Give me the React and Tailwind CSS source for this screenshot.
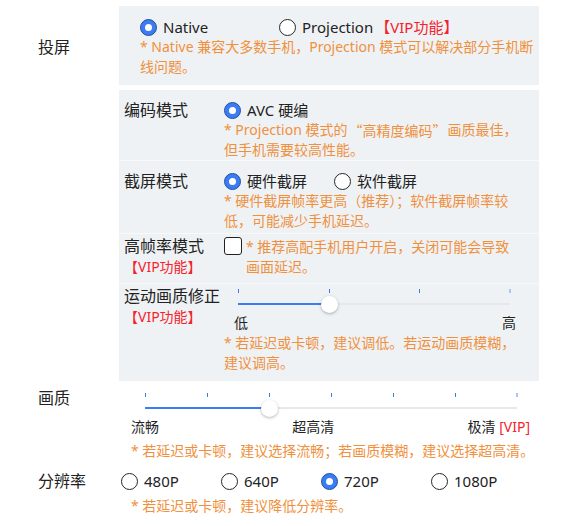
import React from "react";

const Radio = ({ checked }) =>
  checked ? (
    <span className="w-[17px] h-[17px] rounded-full bg-[#3b7cf4] border border-[#24529e] flex items-center justify-center shrink-0">
      <span className="w-[7px] h-[7px] rounded-full bg-white" />
    </span>
  ) : (
    <span className="w-[17px] h-[17px] rounded-full bg-white border border-[#262626] shrink-0" />
  );

const Opt = ({ checked, label, w }) => (
  <div className={`flex items-center h-[20px] ${w}`}>
    <Radio checked={checked} />
    <span className="ml-[6px] text-[15px] leading-[20px] text-[#222]">{label}</span>
  </div>
);

const Orange = ({ children, className = "" }) => (
  <div className={`text-[14px] leading-[20px] text-[#f0903c] ${className}`}>{children}</div>
);

const Vip = ({ className = "" }) => (
  <span className={`text-[#f5222d] ${className}`}>【VIP功能】</span>
);

const Slider = ({ ticks, value, width }) => {
  const step = width / (ticks - 1);
  const pos = step * value;
  return (
    <div style={{ width }} className="relative">
      <div className="relative h-[4px]">
        {Array.from({ length: ticks }).map((_, i) => (
          <span
            key={i}
            className={`absolute top-0 h-[4px] ${i === ticks - 1 ? "w-[2px] bg-[#a9c6f7]" : "w-[1px] bg-[#3b7cf4]"}`}
            style={{ left: i === ticks - 1 ? step * i - 1 : step * i }}
          />
        ))}
      </div>
      <div className="relative h-[17px] mt-[3px]">
        <div className="absolute left-0 right-0 top-[7px] h-[2px] bg-[#e6e8eb]" />
        <div className="absolute left-0 top-[7px] h-[2px] bg-[#3b7cf4]" style={{ width: pos }} />
        <div
          className="absolute top-0 w-[17px] h-[17px] rounded-full bg-white shadow-[0_1px_3px_rgba(0,0,0,0.3)]"
          style={{ left: pos - 8 }}
        />
      </div>
    </div>
  );
};

export default function App() {
  return (
    <div className="w-[569px] h-[526px] bg-white pt-[6px] font-['Noto_Sans','Noto_Sans_CJK_SC',sans-serif] text-[#222] overflow-hidden">
      {/* 投屏 */}
      <div className="flex">
        <div className="w-[119px] pl-[38px] flex items-center pt-[3px] text-[16px] leading-[24px]">投屏</div>
        <div className="w-[420px] bg-[#eff2f5] pt-[11px] pb-[8px] pl-[21px]">
          <div className="flex items-center h-[20px]">
            <Opt checked label="Native" w="w-[139px]" />
            <Opt label="Projection" w="" />
            <Vip className="ml-[2px] text-[15px] leading-[20px]" />
          </div>
          <Orange className="w-[398px]">
            * Native 兼容大多数手机，Projection 模式可以解决部分手机断线问题。
          </Orange>
        </div>
      </div>

      {/* panel 2 */}
      <div className="ml-[119px] mt-[5px] w-[420px] bg-[#eff2f5]">
        {/* 编码模式 */}
        <div className="flex pl-[5px] pr-[19px] pt-[10px]">
          <div className="w-[100px] text-[16px] leading-[20px]">编码模式</div>
          <div className="w-[296px]">
            <Opt checked label="AVC 硬编" w="" />
            <Orange>
              * Projection 模式的
              <span className="inline-block align-top h-[20px] mx-[1px] leading-[20px] font-['Noto_Sans_CJK_SC',sans-serif]">“高精度编码”</span>
              画质最佳，但手机需要较高性能。
            </Orange>
          </div>
        </div>
        <div className="h-[1px] bg-[#f7f9fb]" />
        {/* 截屏模式 */}
        <div className="flex pl-[5px] pr-[19px] pt-[10px] pb-[2px]">
          <div className="w-[100px] text-[16px] leading-[20px]">截屏模式</div>
          <div className="w-[296px]">
            <div className="flex">
              <Opt checked label="硬件截屏" w="w-[110px]" />
              <Opt label="软件截屏" w="" />
            </div>
            <Orange>* 硬件截屏帧率更高（推荐）；软件截屏帧率较低，可能减少手机延迟。</Orange>
          </div>
        </div>
        <div className="h-[1px] bg-[#f7f9fb]" />
        {/* 高帧率模式 */}
        <div className="flex pl-[5px] pr-[19px] pt-[1px] pb-[6px]">
          <div className="w-[100px]">
            <div className="text-[16px] leading-[22px]">高帧率模式</div>
            <div className="text-[14px] leading-[20px]">
              <Vip />
            </div>
          </div>
          <div className="w-[296px] flex items-start">
            <span className="mt-[2px] w-[18px] h-[18px] rounded-[3px] border-[1.5px] border-[#222] bg-white shrink-0" />
            <Orange className="ml-[4px] pt-[2px]">* 推荐高配手机用户开启，关闭可能会导致画面延迟。</Orange>
          </div>
        </div>
        <div className="h-[1px] bg-[#f7f9fb]" />
        {/* 运动画质修正 */}
        <div className="flex pl-[5px] pr-[19px] pt-[1px] pb-[8px]">
          <div className="w-[100px]">
            <div className="text-[16px] leading-[22px] whitespace-nowrap">运动画质修正</div>
            <div className="text-[14px] leading-[20px]">
              <Vip />
            </div>
          </div>
          <div className="w-[296px] pt-[4px]">
            <div className="ml-[14px]">
              <Slider ticks={4} value={1} width={272} />
            </div>
            <div className="ml-[10px] w-[282px] flex justify-between text-[14px] leading-[20px]">
              <span>低</span>
              <span>高</span>
            </div>
            <Orange>* 若延迟或卡顿，建议调低。若运动画质模糊，建议调高。</Orange>
          </div>
        </div>
      </div>

      {/* 画质 */}
      <div className="flex mt-[5px]">
        <div className="w-[119px] pl-[38px] text-[16px] leading-[24px]">画质</div>
        <div className="pt-[7px]">
          <div className="ml-[26px]">
            <Slider ticks={7} value={2} width={372} />
          </div>
          <div className="ml-[12px] w-[399px] flex justify-between text-[14px] leading-[20px]">
            <span>流畅</span>
            <span>超高清</span>
            <span>
              极清 <span className="text-[#f5222d]">[VIP]</span>
            </span>
          </div>
          <Orange className="ml-[12px] mt-[4px]">* 若延迟或卡顿，建议选择流畅；若画质模糊，建议选择超高清。</Orange>
        </div>
      </div>

      {/* 分辨率 */}
      <div className="flex mt-[9px]">
        <div className="w-[119px] pl-[38px] text-[16px] leading-[22px]">分辨率</div>
        <div>
          <div className="flex pl-[2px] h-[22px] items-center">
            <Opt label="480P" w="w-[100px]" />
            <Opt label="640P" w="w-[100px]" />
            <Opt checked label="720P" w="w-[110px]" />
            <Opt label="1080P" w="" />
          </div>
          <Orange className="ml-[12px] mt-[4px]">* 若延迟或卡顿，建议降低分辨率。</Orange>
        </div>
      </div>
    </div>
  );
}
